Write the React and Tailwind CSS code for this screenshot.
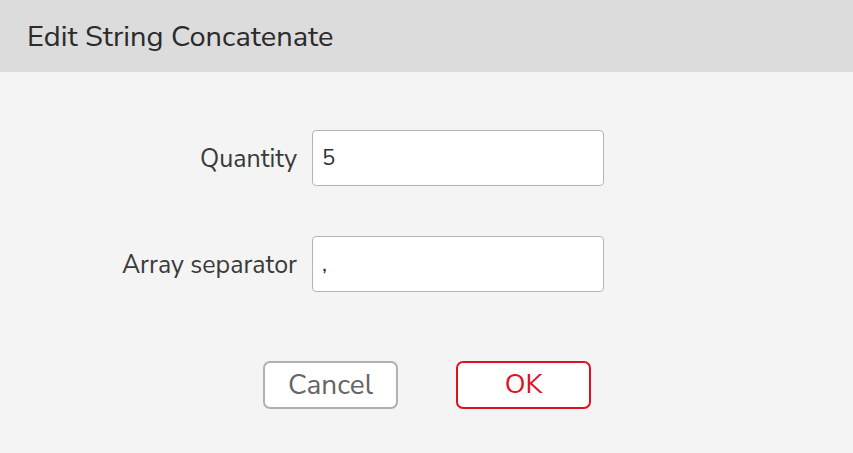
export default function App() {
  return (
    <div className="w-[853px] h-[453px] flex flex-col bg-[#f4f4f4] text-[#333333]" style={{ fontFamily: '"Nunito Sans", Lato, "Open Sans", sans-serif' }}>
      {/* Header */}
      <div className="h-[72px] shrink-0 bg-[#dcdcdc] flex items-center pl-[27px]">
        <h1 className="text-[29px] leading-none text-[#2b2b2b]">Edit String Concatenate</h1>
      </div>

      {/* Fields */}
      <div className="flex flex-col gap-[50px] pt-[58px]">
        <Field label="Quantity" value="5" />
        <Field label="Array separator" value="," />
      </div>

      {/* Actions */}
      <div className="flex justify-center gap-[58px] pt-[69px] pl-[1px]">
        <button className="w-[135px] h-[48px] rounded-[7px] border-2 border-[#b0b0b0] bg-white text-[28px] text-[#666666]">
          Cancel
        </button>
        <button className="w-[135px] h-[48px] rounded-[7px] border-2 border-[#e2101f] bg-white text-[27px] text-[#e2101f]">
          OK
        </button>
      </div>
    </div>
  );
}

function Field({ label, value }) {
  return (
    <div className="flex items-center">
      <label className="w-[297px] pt-[3px] text-right text-[25px] text-[#3a3a3a]">{label}</label>
      <input
        defaultValue={value}
        className="ml-[15px] w-[292px] h-[56px] rounded-[4px] border border-[#b5b5b5] bg-white px-[9px] text-[22px] text-[#333333] outline-none"
        style={{ fontFamily: 'inherit' }}
      />
    </div>
  );
}
